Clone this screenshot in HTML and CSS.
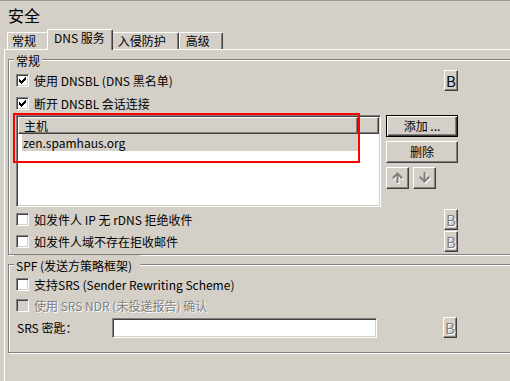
FILE: index.html
```html
<!DOCTYPE html>
<html lang="zh-CN">
<head>
  <meta charset="UTF-8" />
  <title>安全</title>
  <link rel="stylesheet" href="styles.css">
</head>
<body>
  <div class="page">
    <div class="title">安全</div>

    <div class="tabs">
      <div class="tab first">常规</div>
      <div class="tab active">DNS 服务</div>
      <div class="tab">入侵防护</div>
      <div class="tab">高级</div>
    </div>

    <div class="panel">
      <fieldset class="group general">
        <legend>常规</legend>

        <div class="row r1">
          <label class="check">
            <span class="box">
              <svg width="11" height="11" viewBox="0 0 11 11"><path transform="translate(2 2)" d="M0 2H1V3H2V4H3V3H4V2H5V1H6V0H7V3H6V4H5V5H4V6H3V7H2V6H1V5H0Z" fill="#000"/></svg>
            </span>
            使用 DNSBL (DNS 黑名单)
          </label>
          <button class="b-btn">B</button>
        </div>

        <div class="row r2">
          <label class="check">
            <span class="box">
              <svg width="11" height="11" viewBox="0 0 11 11"><path transform="translate(2 2)" d="M0 2H1V3H2V4H3V3H4V2H5V1H6V0H7V3H6V4H5V5H4V6H3V7H2V6H1V5H0Z" fill="#000"/></svg>
            </span>
            断开 DNSBL 会话连接
          </label>
        </div>

        <div class="list-area">
          <div class="list">
            <div class="list-head">
              <div class="col">主机</div>
              <div class="col filler"></div>
            </div>
            <div class="list-row">zen.spamhaus.org</div>
          </div>

          <div class="list-buttons">
            <button class="btn default">添加 ...</button>
            <button class="btn">删除</button>
            <div class="arrows">
              <button class="btn arrow">
                <svg width="12" height="13" viewBox="0 0 12 13">
                  <path transform="translate(1 1)" d="M5.5 0L11 5.5L9.5 7L6.5 4V11H4.5V4L1.5 7L0 5.5Z" fill="#fff"/>
                  <path d="M5.5 0L11 5.5L9.5 7L6.5 4V11H4.5V4L1.5 7L0 5.5Z" fill="#808080"/>
                </svg>
              </button>
              <button class="btn arrow">
                <svg width="12" height="13" viewBox="0 0 12 13">
                  <path transform="translate(1 1)" d="M5.5 11L11 5.5L9.5 4L6.5 7V0H4.5V7L1.5 4L0 5.5Z" fill="#fff"/>
                  <path d="M5.5 11L11 5.5L9.5 4L6.5 7V0H4.5V7L1.5 4L0 5.5Z" fill="#808080"/>
                </svg>
              </button>
            </div>
          </div>

          <div class="highlight"></div>
        </div>

        <div class="row r3">
          <label class="check"><span class="box"></span>如发件人 IP 无 rDNS 拒绝收件</label>
          <button class="b-btn" disabled>B</button>
        </div>

        <div class="row r4">
          <label class="check"><span class="box"></span>如发件人域不存在拒收邮件</label>
          <button class="b-btn" disabled>B</button>
        </div>
      </fieldset>

      <fieldset class="group spf">
        <legend>SPF (发送方策略框架)</legend>

        <div class="row ra">
          <label class="check"><span class="box"></span>支持SRS (Sender Rewriting Scheme)</label>
        </div>

        <div class="row rb">
          <label class="check disabled"><span class="box"></span>使用 SRS NDR (未投递报告) 确认</label>
        </div>

        <div class="row rc">
          <div class="key">
            <span class="key-label">SRS 密匙：</span>
            <span class="input"></span>
          </div>
          <button class="b-btn" disabled>B</button>
        </div>
      </fieldset>
    </div>
  </div>
</body>
</html>
```

FILE: styles.css
```css
* {
  box-sizing: border-box;
}

html, body {
  margin: 0;
  padding: 0;
  height: 100%;
  overflow: hidden;
  background: #d4d0c8;
  color: #000;
  font-family: "Noto Sans CJK SC", sans-serif;
  font-size: 12px;
}

.page {
  display: flex;
  flex-direction: column;
  height: 100%;
  border-top: 1px solid #999;
}

.title {
  font-size: 16px;
  line-height: 20px;
  padding: 4px 0 0 8px;
}

/* tab strip */
.tabs {
  display: flex;
  align-items: flex-end;
  height: 20px;
  margin: 4px 0 0 7px;
  position: relative;
  z-index: 1;
}

.tab {
  height: 17px;
  line-height: 14px;
  padding: 1px 12px 0 6px;
  border: 1px solid #fff;
  border-bottom: 0;
  border-right-color: #404040;
  border-radius: 2px 2px 0 0;
  box-shadow: inset -1px 0 #808080;
  background: #d4d0c8;
  white-space: nowrap;
}

.tab.first {
  padding-left: 4px;
}

.tab.active {
  height: 21px;
  margin: 0 -2px -1px;
  padding: 1px 7px 0 6px;
  position: relative;
}

.panel {
  flex: 1;
  min-height: 0;
  overflow: hidden;
  margin-left: 4px;
  padding-left: 3px;
  border-top: 1px solid #fff;
  border-left: 1px solid #fff;
}

/* etched group boxes */
.group {
  width: 520px;
  margin: 0;
  padding: 0 0 2px 7px;
  border: 1px solid #808080;
  box-shadow: inset 1px 1px #fff, 1px 1px #fff;
}

.group legend {
  margin-left: -2px;
  padding: 4px 2px 0;
  line-height: 14px;
  background: #d4d0c8;
}

.group.spf {
  padding-bottom: 14px;
}

.group.spf legend {
  padding-right: 8px;
}

.row {
  display: flex;
  align-items: center;
  justify-content: space-between;
  width: 442px;
  height: 22px;
}

.r1 { margin-top: 1px; }
.r2 { height: 24px; }
.r3 { margin-top: 2px; height: 21px; }
.rb { height: 21px; }
.rc { margin-top: 1px; height: 21px; }

.check {
  display: flex;
  align-items: center;
  gap: 5px;
  white-space: nowrap;
}

.check.disabled {
  color: #808080;
  text-shadow: 1px 1px 0 #fff;
}

.box {
  width: 13px;
  height: 13px;
  background: #fff;
  border: 1px solid;
  border-color: #808080 #fff #fff #808080;
  box-shadow: inset 1px 1px #404040, inset -1px -1px #d4d0c8;
}

.box svg {
  display: block;
}

.check.disabled .box {
  background: #d4d0c8;
}

/* buttons */
button {
  font-family: inherit;
  font-size: 12px;
  color: #000;
  margin: 0;
  padding: 0;
  background: #d4d0c8;
  border: 1px solid;
  border-color: #fff #404040 #404040 #fff;
  box-shadow: inset -1px -1px #808080;
  border-radius: 0;
}

.btn {
  width: 72px;
  height: 22px;
  line-height: 18px;
}

.btn.default {
  border-color: #000;
  box-shadow: inset 1px 1px #fff, inset -1px -1px #404040, inset -2px -2px #808080;
}

.b-btn {
  width: 14px;
  height: 21px;
  font-size: 15px;
  line-height: 17px;
}

.b-btn:disabled {
  color: #808080;
  text-shadow: 1px 1px 0 #fff;
}

.arrows {
  display: flex;
  gap: 4px;
}

.btn.arrow {
  width: 23px;
  display: flex;
  align-items: center;
  justify-content: center;
  padding: 0 0 0 1px;
}

.btn.arrow svg {
  display: block;
}

/* host list */
.list-area {
  display: flex;
  gap: 5px;
  position: relative;
}

.list {
  width: 365px;
  height: 92px;
  padding: 1px;
  background: #fff;
  border: 1px solid;
  border-color: #808080 #fff #fff #808080;
  box-shadow: inset 1px 1px #404040, inset -1px -1px #d4d0c8;
}

.list-head {
  display: flex;
  height: 17px;
}

.col {
  width: 340px;
  padding-left: 5px;
  line-height: 15px;
  background: #d4d0c8;
  border: 1px solid;
  border-color: #fff #404040 #404040 #fff;
  box-shadow: inset -1px -1px #808080;
}

.col.filler {
  flex: 1;
}

.list-row {
  width: 336px;
  height: 17px;
  margin-left: 4px;
  padding-left: 1px;
  line-height: 17px;
  background: #d4d0c8;
}

.list-buttons {
  display: flex;
  flex-direction: column;
  gap: 4px;
}

.highlight {
  position: absolute;
  left: -3px;
  top: -2px;
  width: 347px;
  height: 50px;
  border: 2px solid #f00;
  pointer-events: none;
}

/* SRS key */
.key {
  display: flex;
  align-items: center;
}

.key-label {
  width: 96px;
  padding-left: 1px;
}

.input {
  width: 265px;
  height: 20px;
  background: #fff;
  border: 1px solid;
  border-color: #808080 #fff #fff #808080;
  box-shadow: inset 1px 1px #404040, inset -1px -1px #d4d0c8;
}

.rc .b-btn {
  margin-right: 1px;
}
```
